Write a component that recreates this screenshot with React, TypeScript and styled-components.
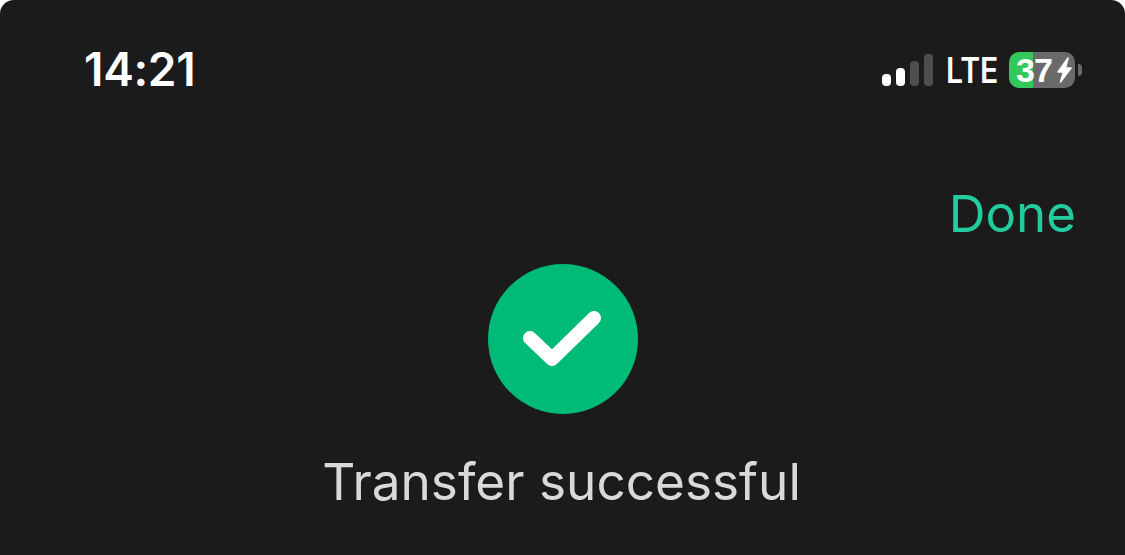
import styled, { createGlobalStyle } from 'styled-components';

const GlobalStyle = createGlobalStyle`
  html, body {
    margin: 0;
    padding: 0;
    background: #ffffff;
  }
`;

const Screen = styled.div`
  width: 1125px;
  height: 555px;
  box-sizing: border-box;
  overflow: hidden;
  background: #1b1b1b;
  border-radius: 14px 14px 0 0;
  font-family: Inter, 'Liberation Sans', sans-serif;
  display: flex;
  flex-direction: column;
`;

const StatusBar = styled.div`
  height: 51px;
  margin-top: 44px;
  padding: 0 43px 0 84px;
  display: flex;
  align-items: center;
  justify-content: space-between;
`;

const Time = styled.span`
  font-size: 46px;
  font-weight: 600;
  line-height: 51px;
  color: #ffffff;
  letter-spacing: -0.3px;
`;

const StatusIcons = styled.div`
  display: flex;
  align-items: center;
`;

const Signal = styled.div`
  display: flex;
  align-items: flex-end;
  gap: 5px;
  height: 32px;
  margin-right: 13px;
`;

const SignalBar = styled.span<{ $h: number; $on?: boolean }>`
  width: 9px;
  height: ${(p) => p.$h}px;
  border-radius: 4px;
  background: ${(p) => (p.$on ? '#ffffff' : '#4e4e4e')};
`;

const Network = styled.span`
  width: 52px;
  margin-right: 11px;
  font-size: 35px;
  font-weight: 600;
  line-height: 36px;
  color: #ffffff;
  white-space: nowrap;
  transform: scaleX(0.86);
  transform-origin: left center;
`;

const Battery = styled.div`
  width: 66px;
  height: 36px;
  border-radius: 10px;
  background: linear-gradient(to right, #34c759 24px, #6a6a6a 24px);
  display: flex;
  align-items: center;
  gap: 5px;
  padding-left: 7px;
  box-sizing: border-box;
  color: #ffffff;
  font-family: 'Liberation Sans', sans-serif;
  font-size: 34px;
  font-weight: 700;
  line-height: 36px;
  letter-spacing: -1px;

  svg {
    flex: none;
  }
`;

const BatteryNub = styled.span`
  width: 4px;
  height: 12px;
  margin-left: 3px;
  border-radius: 0 6px 6px 0;
  background: #6a6a6a;
`;

const Toolbar = styled.div`
  display: flex;
  justify-content: flex-end;
  padding: 0 49px;
  margin-top: 88px;
`;

const DoneButton = styled.button`
  border: 0;
  padding: 0;
  background: none;
  font-family: inherit;
  font-size: 51px;
  line-height: 62px;
  font-weight: 400;
  color: #22cc9e;
`;

const Result = styled.div`
  display: flex;
  flex-direction: column;
  align-items: center;
  padding-left: 1px;
  margin-top: 19px;
`;

const CheckCircle = styled.div`
  width: 150px;
  height: 150px;
  border-radius: 50%;
  background: #00ba78;
  display: flex;
`;

const Message = styled.div`
  margin-top: 35px;
  padding-right: 3px;
  font-size: 51.3px;
  line-height: 64px;
  font-weight: 400;
  color: #d9d9d9;
  white-space: nowrap;
`;

export default function App() {
  return (
    <>
      <GlobalStyle />
      <Screen>
        <StatusBar>
          <Time>14:21</Time>
          <StatusIcons>
            <Signal>
              <SignalBar $h={12} $on />
              <SignalBar $h={18} $on />
              <SignalBar $h={25} />
              <SignalBar $h={32} />
            </Signal>
            <Network>LTE</Network>
            <Battery>
              37
              <svg width="15" height="26" viewBox="0 0 15 26">
                <path
                  d="M11 1 L1 15 H6.5 L3.5 25 L14 11 H8.5 Z"
                  fill="#ffffff"
                  stroke="#ffffff"
                  strokeWidth="1.5"
                  strokeLinejoin="round"
                />
              </svg>
            </Battery>
            <BatteryNub />
          </StatusIcons>
        </StatusBar>
        <Toolbar>
          <DoneButton>Done</DoneButton>
        </Toolbar>
        <Result>
          <CheckCircle>
            <svg width="150" height="150" viewBox="0 0 150 150">
              <path
                d="M42 74 L64 95 L106 54"
                fill="none"
                stroke="#ffffff"
                strokeWidth="14"
                strokeLinecap="round"
                strokeLinejoin="round"
              />
            </svg>
          </CheckCircle>
          <Message>Transfer successful</Message>
        </Result>
      </Screen>
    </>
  );
}
